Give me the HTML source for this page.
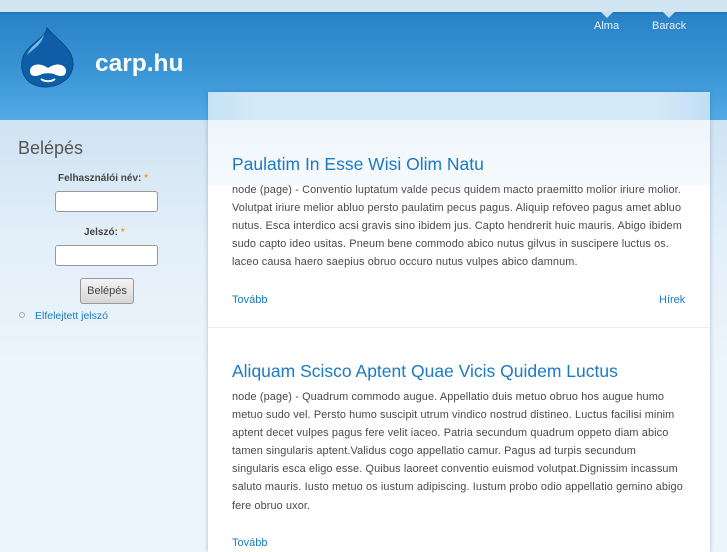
<!DOCTYPE html>
<html><head><meta charset="utf-8"><style>
*{margin:0;padding:0;box-sizing:border-box}
body{width:727px;height:545px;overflow:hidden;position:relative;font-family:"Liberation Sans",sans-serif;background:#edf5fc}
#top{position:absolute;left:0;top:0;width:727px;height:12px;background:#d0e4f2}
#hdr{position:absolute;left:0;top:12px;width:727px;height:108px;background:linear-gradient(#1f73bd 0,#2a82c6 3px,#3893d4 50%,#52aae5 100%)}
#body{position:absolute;left:0;top:120px;width:727px;height:425px;background:linear-gradient(#cfe3f1 0,#e3eff9 120px,#edf5fc 260px)}
#site{position:absolute;left:95px;top:50px;color:#fff;font-weight:bold;font-size:24.5px}
.nav{position:absolute;top:20px;color:#eaf3fb;font-size:11px}
.nav:before{content:"";position:absolute;left:50%;top:-8px;margin-left:-6px;border:6px solid transparent;border-top:6px solid #c9dff0}
#cont{position:absolute;left:208px;top:92px;width:502px;height:460px;background:#fff;box-shadow:0 0 4px rgba(30,90,150,.35)}
#cont .hd{height:28px;background:linear-gradient(90deg,#c4e1f5,#d5eaf8 10%,#d5eaf8 88%,#c2def4)}
#cont .hd2{height:66px;background:linear-gradient(#eef5fb,#f6fafd)}
h2{font-weight:normal;color:#1b7ac2;font-size:17.5px;position:absolute;left:24px}
p{font-size:10.9px;letter-spacing:0.12px;color:#494949;line-height:18.1px;position:absolute;left:24px;width:453px}
a{color:#1b7ac2;text-decoration:none;font-size:11px;position:absolute}
#side h3{position:absolute;left:18px;top:138px;font-weight:normal;font-size:18px;color:#555}
.lbl{position:absolute;font-size:10px;font-weight:bold;color:#444}
.lbl span{color:#f0a020}
.inp{position:absolute;left:55px;width:103px;height:21px;background:#fff;border:1px solid #999;border-radius:3px}
.btn{position:absolute;left:80px;top:278px;width:54px;height:26px;border:1px solid #999;border-radius:3px;background:linear-gradient(#f4f4f4,#d6d6d6);font-size:11px;color:#444;text-align:center;line-height:24px}
</style></head><body>
<div id="top"></div><div id="hdr"></div><div id="body"></div>
<svg style="position:absolute;left:18px;top:27px" width="60" height="62" viewBox="0 0 60 62">
<path d="M29 1 C28 10 14 15 7 26 C0 38 4 55 20 59 C36 63 54 54 55 38 C56 22 40 14 29 1Z" fill="#0d5ea6" stroke="#0a4a86" stroke-width="1"/>
<path d="M26 7 C22 15 12 19 9 28 C15 22 24 18 26 7Z" fill="#7ab6e2"/>
<path d="M12 44 C12 37 22 35 30 41 C38 35 48 37 48 44 C48 50 42 50 36 47 C33 46 27 46 24 47 C18 50 12 50 12 44Z" fill="#fff"/>
<path d="M23 52 C27 55 33 55 37 52" stroke="#fff" stroke-width="2" fill="none"/>
</svg>
<div id="site">carp.hu</div>
<div class="nav" style="left:594px">Alma</div>
<div class="nav" style="left:652px">Barack</div>
<div id="cont"><div class="hd"></div><div class="hd2"></div>
<h2 style="top:62px">Paulatim In Esse Wisi Olim Natu</h2>
<p style="top:89px">node (page) - Conventio luptatum valde pecus quidem macto praemitto molior iriure molior. Volutpat iriure melior abluo persto paulatim pecus pagus. Aliquip refoveo pagus amet abluo nutus. Esca interdico acsi gravis sino ibidem jus. Capto hendrerit huic mauris. Abigo ibidem sudo capto ideo usitas. Pneum bene commodo abico nutus gilvus in suscipere luctus os. laceo causa haero saepius obruo occuro nutus vulpes abico damnum.</p>
<a style="left:24px;top:202px">Tovább</a><a style="left:451px;top:202px">Hírek</a>
<div style="position:absolute;left:0;top:235px;width:502px;height:1px;background:#e8eef3"></div>
<h2 style="top:269px">Aliquam Scisco Aptent Quae Vicis Quidem Luctus</h2>
<p style="top:296px">node (page) - Quadrum commodo augue. Appellatio duis metuo obruo hos augue humo metuo sudo vel. Persto humo suscipit utrum vindico nostrud distineo. Luctus facilisi minim aptent decet vulpes pagus fere velit iaceo. Patria secundum quadrum oppeto diam abico tamen singularis aptent.Validus cogo appellatio camur. Pagus ad turpis secundum singularis esca eligo esse. Quibus laoreet conventio euismod volutpat.Dignissim incassum saluto mauris. Iusto metuo os iustum adipiscing. Iustum probo odio appellatio gemino abigo fere obruo uxor.</p>
<a style="left:24px;top:445px">Tovább</a>
</div>
<div id="side"><h3>Belépés</h3>
<div class="lbl" style="left:58px;top:173px">Felhasználói név: <span>*</span></div>
<div class="inp" style="top:191px"></div>
<div class="lbl" style="left:84px;top:227px">Jelszó: <span>*</span></div>
<div class="inp" style="top:245px"></div>
<div class="btn">Belépés</div>
<div style="position:absolute;left:19px;top:312px;width:6px;height:6px;border:1px solid #aaa;border-radius:50%"></div>
<a style="left:35px;top:310px;font-size:10.5px">Elfelejtett jelszó</a>
</div>
</body></html>
